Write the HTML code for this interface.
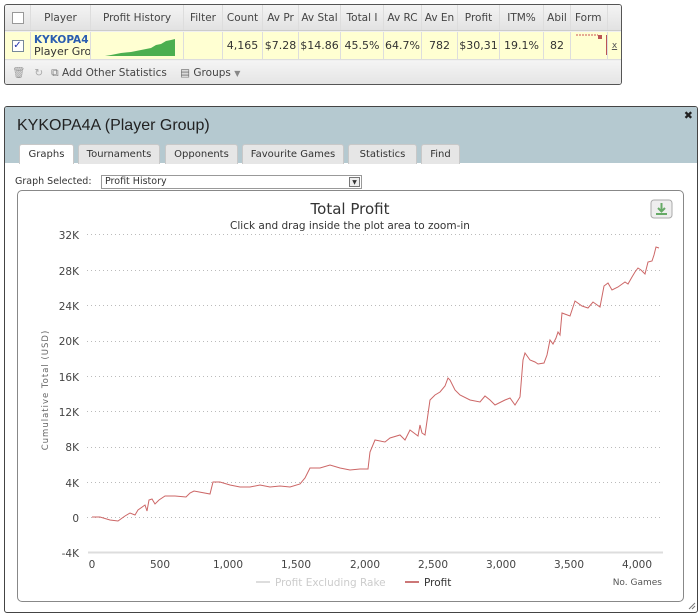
<!DOCTYPE html>
<html><head><style>
*{margin:0;padding:0;box-sizing:border-box}
body{width:700px;height:615px;background:#fff;font-family:"DejaVu Sans","Liberation Sans",sans-serif;position:relative;overflow:hidden}
.a{position:absolute}
.tb{left:4px;top:4px;width:618px;height:81px;border:1px solid #555;border-radius:3px;background:#f0f0f0;overflow:hidden}
.hd{top:0;left:0;width:616px;height:26px;background:linear-gradient(#f4f4f4,#e2e2e2);border-bottom:1px solid #ccc}
.rw{top:27px;left:0;width:616px;height:28px;background:#ffffd2;border-bottom:1px solid #ddd}
.c{position:absolute;top:0;height:100%;border-right:1px solid #ddd;font-size:10.5px;color:#444;line-height:26px;text-align:center;white-space:nowrap;overflow:hidden}
.rw .c{font-size:11px;line-height:28px;color:#333}
.ft{top:56px;left:0;width:616px;height:24px;background:linear-gradient(#f4f4f4,#e4e4e4);font-size:10.5px;color:#444;line-height:24px}
.dl{left:4px;top:106px;width:694px;height:507px;border:1px solid #444;border-radius:3px;background:#fff;overflow:hidden}
.dh{left:0;top:0;width:692px;height:56px;background:#b5c9d0}
.tab{position:absolute;top:37px;height:20px;background:#e6e6e6;border:1px solid #c8c8c8;border-bottom:none;border-radius:3px 3px 0 0;font-size:10px;color:#333;text-align:center;line-height:19px}
</style></head><body>
<div class="a tb">
 <div class="a hd">
  <div class="c" style="left:0;width:26px"><div style="width:12px;height:12px;border:1px solid #999;background:#fff;margin:7px auto"></div></div>
  <div class="c" style="left:26px;width:60px">Player</div>
  <div class="c" style="left:86px;width:93px">Profit History</div>
  <div class="c" style="left:179px;width:39px">Filter</div>
  <div class="c" style="left:218px;width:40px">Count</div>
  <div class="c" style="left:258px;width:36px">Av Pr</div>
  <div class="c" style="left:294px;width:42px">Av Stal</div>
  <div class="c" style="left:336px;width:43px">Total I</div>
  <div class="c" style="left:379px;width:38px">Av RC</div>
  <div class="c" style="left:417px;width:36px">Av En</div>
  <div class="c" style="left:453px;width:42px">Profit</div>
  <div class="c" style="left:495px;width:44px">ITM%</div>
  <div class="c" style="left:539px;width:27px">Abil</div>
  <div class="c" style="left:566px;width:37px;text-align:left;padding-left:4px">Form</div>
 </div>
 <div class="a rw">
  <div class="c" style="left:0;width:26px"><div style="width:12px;height:12px;border:1px solid #789;background:#fff;margin:8px auto;font-size:10px;line-height:10px;color:#23a">✓</div></div>
  <div class="c" style="left:26px;width:60px;text-align:left;padding-left:3px;line-height:12px;padding-top:2px"><b style="color:#2a5db0;font-size:10.5px">KYKOPA4</b><br>Player Gro</div>
  <div class="c" style="left:86px;width:93px"><svg width="93" height="28" style="position:absolute;left:0;top:0"><path d="M14 24 L20 23 L30 21 L40 20 L50 18 L60 16 L65 13 L70 12 L75 9 L80 8 L84 7 L84 24Z" fill="#4caf50"/></svg></div>
  <div class="c" style="left:179px;width:39px"></div>
  <div class="c" style="left:218px;width:40px">4,165</div>
  <div class="c" style="left:258px;width:36px">$7.28</div>
  <div class="c" style="left:294px;width:42px">$14.86</div>
  <div class="c" style="left:336px;width:43px">45.5%</div>
  <div class="c" style="left:379px;width:38px">64.7%</div>
  <div class="c" style="left:417px;width:36px">782</div>
  <div class="c" style="left:453px;width:42px">$30,31</div>
  <div class="c" style="left:495px;width:44px">19.1%</div>
  <div class="c" style="left:539px;width:27px">82</div>
  <div class="c" style="left:566px;width:37px"><svg width="37" height="28" style="position:absolute;left:0;top:0"><path d="M5 3H27" stroke="#c55" stroke-dasharray="2 1" stroke-width="1"/><rect x="27" y="3" width="4" height="4" fill="#b55"/><rect x="35" y="3" width="2" height="20" fill="#b55"/></svg></div>
  <div class="c" style="left:603px;width:13px;border:none;color:#555;font-size:9px;text-decoration:underline">x</div>
 </div>
 <div class="a ft"><span style="color:#999;margin-left:7px">🗑</span><span style="color:#aaa;margin-left:9px">↻</span><span style="margin-left:8px;color:#777">⧉</span> Add Other Statistics <span style="margin-left:10px;color:#666">▤</span> Groups <span style="color:#888;font-size:8px">▼</span></div>
</div>

<div class="a dl">
 <div class="a dh">
  <div class="a" style="left:12px;top:10px;font-family:'Liberation Sans',sans-serif;font-size:16px;color:#222">KYKOPA4A (Player Group)</div>
  <div class="a" style="right:4px;top:2px;font-size:11px;font-weight:bold;color:#222">✖</div>
  <div class="tab" style="left:14px;width:55px;background:#fff;height:20px">Graphs</div>
  <div class="tab" style="left:73px;width:82px">Tournaments</div>
  <div class="tab" style="left:160px;width:73px">Opponents</div>
  <div class="tab" style="left:237px;width:102px">Favourite Games</div>
  <div class="tab" style="left:343px;width:69px">Statistics</div>
  <div class="tab" style="left:416px;width:39px">Find</div>
 </div>
 <div class="a" style="left:10px;top:69px;font-size:9.5px;color:#333">Graph Selected:</div>
 <div class="a" style="left:96px;top:68px;width:261px;height:14px;border:1px solid #999;font-size:9.5px;color:#333;line-height:12px;padding-left:3px">Profit History<div style="position:absolute;right:1px;top:1px;width:11px;height:10px;border:1px solid #777;background:#eee;font-size:6px;text-align:center;line-height:9px">▼</div></div>
 <div class="a" style="left:12px;top:83px;width:667px;height:412px;border:1px solid #888;border-radius:5px"></div>
</div>
<svg class="a" style="left:0;top:0" width="700" height="615">
 <g stroke="#bbb" stroke-dasharray="1 3" stroke-width="1">
  <path d="M87 234.5H662M87 270.5H662M87 305.5H662M87 341.5H662M87 376.5H662M87 411.5H662M87 447.5H662M87 482.5H662M87 517.5H662"/>
 </g>
 <path d="M88 552.5H663" stroke="#ddd" stroke-width="2"/>
 <g font-family="DejaVu Sans,sans-serif" font-size="10.5" fill="#444" text-anchor="end">
  <text x="79" y="239">32K</text><text x="79" y="275">28K</text><text x="79" y="310">24K</text><text x="79" y="345">20K</text><text x="79" y="381">16K</text><text x="79" y="416">12K</text><text x="79" y="451">8K</text><text x="79" y="487">4K</text><text x="79" y="522">0</text><text x="79" y="557">-4K</text>
 </g>
 <g font-family="DejaVu Sans,sans-serif" font-size="10.5" fill="#444" text-anchor="middle">
  <text x="92" y="568">0</text><text x="160" y="568">500</text><text x="228" y="568">1,000</text><text x="296" y="568">1,500</text><text x="365" y="568">2,000</text><text x="433" y="568">2,500</text><text x="501" y="568">3,000</text><text x="569" y="568">3,500</text><text x="637" y="568">4,000</text>
 </g>
 <text x="48" y="390" transform="rotate(-90 48 390)" font-family="DejaVu Sans,sans-serif" font-size="8.5" fill="#666" text-anchor="middle" letter-spacing="1">Cumulative Total (USD)</text>
 <text x="350" y="214" font-family="DejaVu Sans,sans-serif" font-size="15" fill="#333" text-anchor="middle">Total Profit</text>
 <text x="350" y="229" font-family="DejaVu Sans,sans-serif" font-size="10.5" fill="#333" text-anchor="middle">Click and drag inside the plot area to zoom-in</text>
 <rect x="651" y="200" width="21" height="18" rx="3" fill="#eee" stroke="#aaa"/>
 <path d="M661.5 203v8M658 208l3.5 3.5 3.5-3.5M656 214h11" stroke="#6a6" stroke-width="2" fill="none"/>
 <path d="M256 582h14" stroke="#ddd" stroke-width="2"/>
 <text x="275" y="586" font-family="DejaVu Sans,sans-serif" font-size="10.5" fill="#ccc">Profit Excluding Rake</text>
 <path d="M405 582h14" stroke="#c77" stroke-width="2"/>
 <text x="424" y="586" font-family="DejaVu Sans,sans-serif" font-size="10.5" fill="#333">Profit</text>
 <text x="662" y="585" font-family="DejaVu Sans,sans-serif" font-size="9" fill="#555" text-anchor="end">No. Games</text>
 <polyline fill="none" stroke="#c66" stroke-width="1" points="92,517 100,517 110,520 118,521 125,516 130,513 135,515 138,510 145,505 147,511 149,500 152,499 155,504 159,500 165,496 175,496 186,497 190,493 194,491 210,494 213,482 220,482 230,485 240,487 250,487 260,485 270,487 280,486 290,487 300,484 305,478 310,468 320,468 330,465 340,468 350,470 360,469 368,469 370,452 375,440 385,442 390,438 400,435 405,440 410,430 418,436 420,425 422,433 425,435 430,400 435,395 440,392 445,386 448,378 450,380 455,390 460,395 470,400 480,402 485,396 490,400 495,405 505,400 510,398 515,405 520,397 523,360 525,353 530,360 535,362 538,364 544,363 547,355 550,340 553,344 556,338 558,332 560,335 562,313 570,316 575,301 582,306 588,308 593,302 600,307 604,286 608,283 612,290 618,287 625,282 628,284 632,277 635,272 638,268 641,270 645,274 648,262 652,261 654,255 656,247 659,248"/>
 <path d="M689 609l6-6M692 609l3-3" stroke="#777"/>
</svg>
</body></html>
